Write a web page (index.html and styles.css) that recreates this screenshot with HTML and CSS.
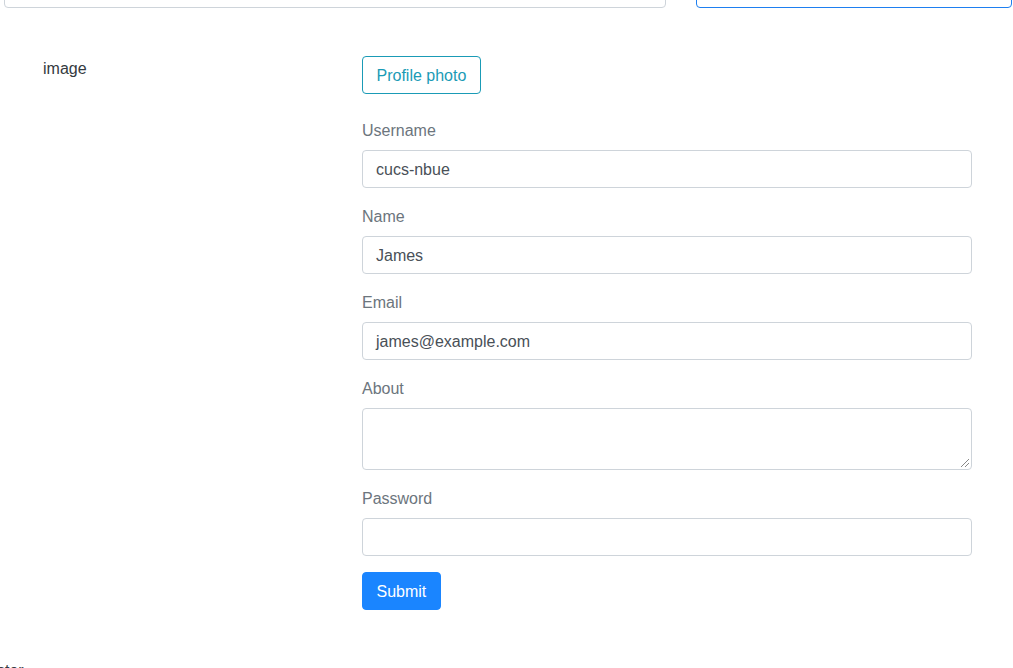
FILE: index.html
```html
<!DOCTYPE html>
<html>
<head>
<meta charset="utf-8">
<link rel="stylesheet" href="styles.css">
</head>
<body>
<div class="topbar">
  <div class="top-input"></div>
  <div class="top-btn"></div>
</div>
<div class="row">
  <div class="col-side">image</div>
  <div class="col-main">
    <button class="btn btn-outline-info photo">Profile photo</button>
    <div class="group">
      <label>Username</label>
      <div class="control">cucs-nbue</div>
    </div>
    <div class="group">
      <label>Name</label>
      <div class="control">James</div>
    </div>
    <div class="group">
      <label>Email</label>
      <div class="control">james@example.com</div>
    </div>
    <div class="group">
      <label>About</label>
      <div class="control textarea"><span class="grip"></span></div>
    </div>
    <div class="group">
      <label>Password</label>
      <div class="control"></div>
    </div>
    <button class="btn btn-primary">Submit</button>
  </div>
</div>
<div class="footer">ster</div>
</body>
</html>
```
FILE: styles.css
```css
* { box-sizing: border-box; }
html, body { margin: 0; padding: 0; }
body {
  font-family: "Liberation Sans", Arial, sans-serif;
  font-size: 16px;
  line-height: 24px;
  color: #343a40;
  background: #fff;
  overflow: hidden;
  height: 668px;
}
.topbar {
  display: flex;
  margin-top: -30px;
  padding-left: 4px;
}
.top-input {
  width: 662px;
  height: 38px;
  border: 1px solid #ced4da;
  border-radius: 4px;
}
.top-btn {
  margin-left: 30px;
  width: 316px;
  height: 38px;
  border: 1px solid #1e7ff0;
  border-radius: 4px;
}
.row {
  display: flex;
  margin: 48px 26px 0 27px;
}
.col-side {
  width: 33.3333%;
  padding: 1px 15px 0 16px;
  color: #343a40;
}
.col-main {
  flex: 1;
  padding: 0 15px;
}
.btn {
  display: inline-block;
  font-family: inherit;
  font-size: 16px;
  line-height: 24px;
  padding: 7px 13.5px 5px;
  border-radius: 4px;
  border: 1px solid transparent;
  background: transparent;
  cursor: pointer;
}
.btn-outline-info {
  color: #1a9bb6;
  border-color: #1a9bb6;
}
.photo {
  margin-bottom: 24px;
}
.btn-primary {
  background: #1a85ff;
  border-color: #1a85ff;
  color: #fff;
}
.group {
  margin-bottom: 16px;
}
.group label {
  display: block;
  padding-top: 1px;
  margin-bottom: 7px;
  color: #6c757d;
}
.control {
  height: 38px;
  border: 1px solid #ced4da;
  border-radius: 4px;
  padding: 7px 13px 5px;
  color: #495057;
}
.control.textarea {
  height: 62px;
  position: relative;
}
.grip {
  position: absolute;
  right: 2px;
  bottom: 2px;
  width: 8px;
  height: 8px;
  background: linear-gradient(135deg, transparent 45%, #888 45%, #888 52%, transparent 52%, transparent 70%, #888 70%, #888 77%, transparent 77%);
}
.footer {
  margin-top: 49px;
  margin-left: -3px;
  color: #343a40;
}
```
